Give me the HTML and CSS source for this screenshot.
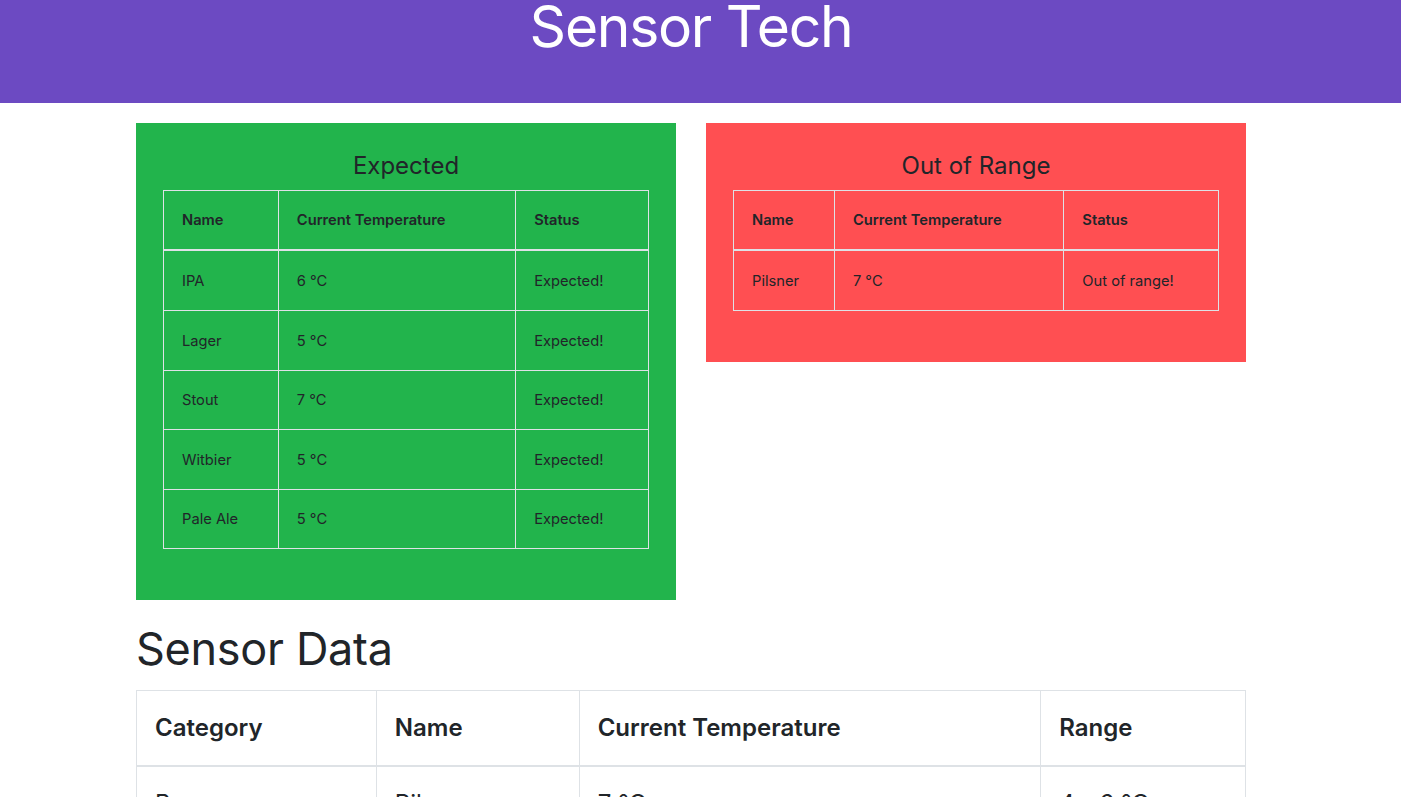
FILE: index.html
```html
<!DOCTYPE html>
<html lang="en">
<head>
<meta charset="utf-8">
<title>Sensor Tech</title>
<link rel="stylesheet" href="styles.css">
</head>
<body>
<header class="site-header">
  <h1 class="site-title">Sensor Tech</h1>
</header>
<div class="page">
<main class="container">
  <div class="status-row">
    <section class="status-card card-expected">
      <h3 class="card-title">Expected</h3>
      <table class="status-table">
        <colgroup><col class="c-exp-name"><col class="c-exp-temp"><col class="c-exp-status"></colgroup>
        <thead><tr><th>Name</th><th>Current Temperature</th><th>Status</th></tr></thead>
        <tbody>
          <tr><td>IPA</td><td>6 °C</td><td>Expected!</td></tr>
          <tr><td>Lager</td><td>5 °C</td><td>Expected!</td></tr>
          <tr><td>Stout</td><td>7 °C</td><td>Expected!</td></tr>
          <tr><td>Witbier</td><td>5 °C</td><td>Expected!</td></tr>
          <tr><td>Pale Ale</td><td>5 °C</td><td>Expected!</td></tr>
        </tbody>
      </table>
    </section>
    <section class="status-card card-out">
      <h3 class="card-title">Out of Range</h3>
      <table class="status-table">
        <colgroup><col class="c-out-name"><col class="c-out-temp"><col class="c-out-status"></colgroup>
        <thead><tr><th>Name</th><th>Current Temperature</th><th>Status</th></tr></thead>
        <tbody>
          <tr><td>Pilsner</td><td>7 °C</td><td>Out of range!</td></tr>
        </tbody>
      </table>
    </section>
  </div>
  <h1 class="section-title">Sensor Data</h1>
  <table class="data-table">
    <colgroup><col class="c-cat"><col class="c-name"><col class="c-temp"><col class="c-range"></colgroup>
    <thead><tr><th>Category</th><th>Name</th><th>Current Temperature</th><th>Range</th></tr></thead>
    <tbody>
      <tr><td>Beer</td><td>Pilsner</td><td>7 °C</td><td>4 - 6 °C</td></tr>
      <tr><td>Beer</td><td>IPA</td><td>6 °C</td><td>4 - 6 °C</td></tr>
    </tbody>
  </table>
</main>
</div>
</body>
</html>
```
FILE: styles.css
```css
* { box-sizing: border-box; }
html, body { margin: 0; padding: 0; }
body {
  font-family: Inter, "Noto Sans", "Liberation Sans", sans-serif;
  color: #212529;
  background: #fff;
  font-size: 16px;
  line-height: 1.5;
}
.site-header {
  background: #6c4ac2;
  height: 103px;
  padding-right: 19px;
  text-align: center;
  overflow: hidden;
}
.site-title {
  margin: -2px 0 0;
  font-size: 57px;
  font-weight: 400;
  line-height: 1;
  color: #fff;
  letter-spacing: -1.3px;
}
.page {
  padding-right: 19px;
}
.container {
  width: 1110px;
  margin: 0 auto;
}
.status-row {
  display: flex;
  align-items: flex-start;
  gap: 30px;
  margin-top: 20px;
}
.status-card {
  flex: 1 1 0;
  padding: 29px 0 51px;
}
.card-expected { background: #22b44c; }
.card-out { background: #ff4f52; }
.card-title {
  margin: 0 0 9px;
  text-align: center;
  font-size: 24px;
  font-weight: 400;
  line-height: 1.2;
}
.status-table {
  width: 90%;
  margin: 0 auto;
  border-collapse: collapse;
  font-size: 14.7px;
  line-height: 21px;
}
.status-table th,
.status-table td {
  border: 1px solid #dee2e6;
  padding: 19.6px 18px 18px;
  text-align: left;
}
.status-table th { font-weight: 600; }
.status-table thead th { border-bottom-width: 2px; }
.c-exp-name { width: 115px; }
.c-exp-temp { width: 238px; }
.c-exp-status { width: 133px; }
.c-out-name { width: 101px; }
.c-out-temp { width: 230px; }
.c-out-status { width: 155px; }
.section-title {
  margin: 22px 0 14px;
  font-size: 45px;
  font-weight: 400;
  line-height: 54px;
  letter-spacing: -0.3px;
}
.data-table {
  width: 100%;
  border-collapse: collapse;
  font-size: 24px;
  line-height: 36px;
}
.data-table th,
.data-table td {
  border: 1px solid #dee2e6;
  padding: 19px 18px;
  text-align: left;
}
.data-table th { font-weight: 600; }
.data-table thead th { border-bottom-width: 2px; }
.c-cat { width: 240px; }
.c-name { width: 203px; }
.c-temp { width: 462px; }
.c-range { width: 205px; }
```
